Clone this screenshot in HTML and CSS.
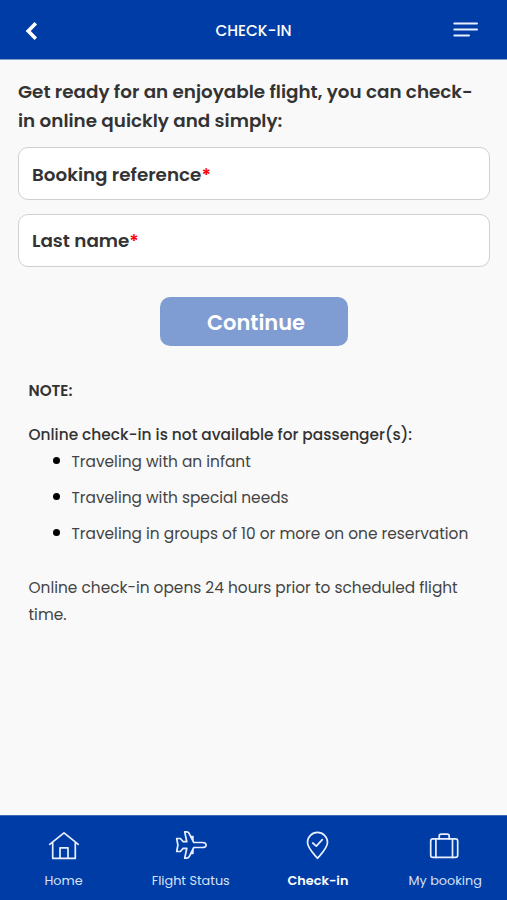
FILE: index.html
```html
<!DOCTYPE html>
<html lang="en">
<head>
<meta charset="utf-8">
<meta name="viewport" content="width=device-width, initial-scale=1">
<title>Check-in</title>
<link rel="stylesheet" href="styles.css">
</head>
<body>
<header class="topbar">
  <svg class="back" viewBox="0 0 20 24"><path d="M14.8 4.200 7.200 12l7.600 7.800"/></svg>
  <h1 class="title">CHECK-IN</h1>
  <svg class="menu" viewBox="0 0 26 18"><path d="M1.300 2.500h22.700M1.300 8.500h22.700M1.300 14.500h14.700"/></svg>
</header>
<main class="content">
  <p class="intro">Get ready for an enjoyable flight, you can check-<br>in online quickly and simply:</p>
  <div class="field">Booking reference<span class="required">*</span></div>
  <div class="field">Last name<span class="required">*</span></div>
  <button class="continue">Continue</button>
  <section class="note">
    <h2 class="note-title">NOTE:</h2>
    <p class="lead">Online check-in is not available for passenger(s):</p>
    <ul class="list">
      <li>Traveling with an infant</li>
      <li>Traveling with special needs</li>
      <li>Traveling in groups of 10 or more on one reservation</li>
    </ul>
    <p class="opens">Online check-in opens 24 hours prior to scheduled flight<br>time.</p>
  </section>
</main>
<nav class="tabs">
  <a class="tab">
    <svg viewBox="0 0 32 32"><path d="M1.700 14.300 16 2.800l14.300 11.500M4.700 12v16.300h22.600V12M12 28.300V17.800h8v10.500"/></svg>
    <span>Home</span>
  </a>
  <a class="tab">
    <svg viewBox="0 0 32 32"><path d="M18.800 12.500h8.500c2.300 0 3.800 1.100 3.800 2.500s-1.500 2.500-3.800 2.500h-8.500l-4.700 9.300c-.6 1-1.300 1.400-2.300 1.400H9.700l2.100-9.900H8.200l-2.800 3.200H1.700l1.200-6.500L1.700 8.500h3.700l2.800 3.200h3.600L9.700 1.900h2.100c1 0 1.700.4 2.300 1.400z"/><path d="M16.200 6.700h1.700v2.600M16.200 23.300h1.700v-2.600"/></svg>
    <span>Flight Status</span>
  </a>
  <a class="tab active">
    <svg viewBox="0 0 32 32"><path d="M15.500 28.300C12 24.200 5.500 18.200 5.500 12.300a10 9.900 0 0 1 20 0c0 5.900-6.500 11.900-10 16zM10.800 13l3.500 3.200 6-6.500"/></svg>
    <span>Check-in</span>
  </a>
  <a class="tab">
    <svg viewBox="0 0 32 32"><rect x="1.700" y="8.900" width="27" height="18.500" rx="2.200"/><path d="M10.200 8.900V6.200a2 2 0 0 1 2-2h6a2 2 0 0 1 2 2v2.700M6.900 8.900v18.500M23.500 8.900v18.500"/></svg>
    <span>My booking</span>
  </a>
</nav>
</body>
</html>
```
FILE: styles.css
```css
* { box-sizing: border-box; margin: 0; padding: 0; }
body {
  height: 900px;
  display: flex;
  flex-direction: column;
  background: #f9f9f9;
  color: #333;
  font-family: Poppins, Inter, "Liberation Sans", sans-serif;
  overflow: hidden;
}
svg { fill: none; stroke: #fff; display: block; }
.topbar {
  height: 60px;
  flex: none;
  display: grid;
  grid-template-columns: 70px 1fr 70px;
  align-items: center;
  background: #003ca6;
  color: #fff;
  border-bottom: 1px solid #829fd2;
  padding-top: 2px;
}
.back { width: 20px; height: 24px; margin-left: 21px; stroke-width: 3.600; }
.title { font-size: 15.300px; font-weight: 500; text-align: center; line-height: 22px; padding-top: 1px; }
.menu { width: 26px; height: 18px; margin: 0 0 2px 16px; stroke: #e8f0ff; stroke-width: 2; stroke-linecap: round; }
.content { flex: 1; padding: 18px 17px 0 18px; }
.intro { font-size: 18.330px; font-weight: 600; line-height: 28.500px; margin-bottom: 12px; white-space: nowrap; }
.field {
  height: 53px;
  margin-bottom: 13.500px;
  padding: 1px 13px 0;
  border: 1px solid #d0d0d0;
  border-radius: 10px;
  background: #fff;
  display: flex;
  align-items: center;
  font-size: 18.330px;
  font-weight: 600;
}
.required { color: #f00; }
.continue {
  display: block;
  width: 188px;
  height: 49px;
  margin: 30px 0 0 142px;
  padding: 1px 0 0 4px;
  border: 0;
  border-radius: 10px;
  background: #7f9dd2;
  color: #fff;
  font: 600 21px/50px Poppins, Inter, sans-serif;
}
.note { padding: 31.500px 0 0 10.500px; font-size: 15.390px; line-height: 27px; white-space: nowrap; }
.note-title { font-size: 15.200px; font-weight: 600; line-height: 27px; }
.lead { margin-top: 17px; font-weight: 500; }
.list { list-style: none; }
.list li { display: flex; align-items: center; height: 36px; color: #444; }
.list li:first-child { height: 26px; margin-bottom: 5px; }
.list li::before { content: ""; width: 7px; height: 7px; border-radius: 50%; background: #000; margin: -2px 12px 0 24px; }
.opens { margin-top: 23px; color: #444; }
.tabs {
  height: 85px;
  flex: none;
  display: grid;
  grid-template-columns: repeat(4, 127.200px);
  background: #003ca6;
  border-top: 1px solid #3d69b9;
}
.tab { display: flex; flex-direction: column; align-items: center; padding-top: 14px; color: #d5e1f6; font-size: 12.800px; line-height: 20px; }
.tab svg { width: 32px; height: 32px; margin-bottom: 9px; stroke: #e8f0ff; stroke-width: 1.700; stroke-linejoin: round; stroke-linecap: round; }
.active { color: #fff; font-weight: 600; }
```
